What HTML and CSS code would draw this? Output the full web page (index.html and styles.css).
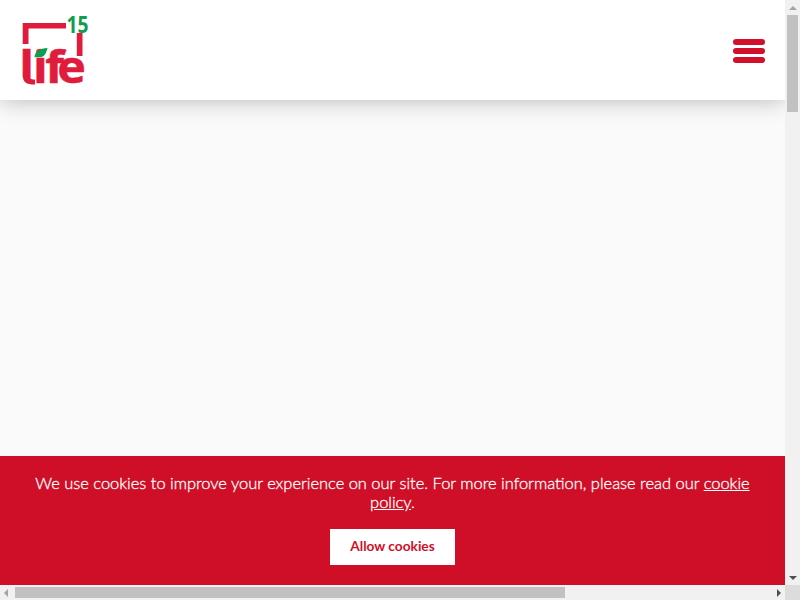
FILE: index.html
```html
<!DOCTYPE html>
<html lang="en">
<head>
<meta charset="utf-8">
<title>Life 15</title>
<link rel="stylesheet" href="styles.css">
</head>
<body>
<div class="frame">
  <div class="viewport">
    <header class="header">
      <svg class="logo" width="72" height="72" viewBox="20 14 72 72" role="img" aria-label="life 15">
        <path class="logo-red" d="M22.700 44V23H66V28.500H28.500V44Z"/>
        <path class="logo-red" d="M76.800 33H82.500V56H76.800Z"/>
        <text class="logo-life" x="0 12.500 23.500 34.500" y="0" transform="translate(19.300 83) scale(1.1 1)">life</text>
        <path class="logo-white" d="M21 77H23.200C23.800 81 26 83.500 30 84V86H21Z"/>
        <path class="logo-red" d="M23 72V76C23 82 26 84.500 35 84.500V79.500C30 79.500 28.500 78 28.500 75V72Z"/>
        <path class="logo-green" d="M34.500 57.300C35 51 40 48.300 47.500 48C46.500 53 44 57.300 40 57.300Z"/>
        <text class="logo-15" x="66.500" y="33" textLength="22" lengthAdjust="spacingAndGlyphs">15</text>
      </svg>
      <button class="menu" aria-label="Menu"><span></span><span></span><span></span></button>
    </header>
    <main class="content"></main>
    <section class="cookie">
      <p class="cookie-text">We use cookies to improve your experience on our site. For more information, please read our <a href="#">cookie policy</a>.</p>
      <a class="cookie-btn" href="#">Allow cookies</a>
    </section>
  </div>
  <div class="vbar">
    <span class="arrow-up"></span>
    <div class="vthumb"></div>
    <span class="arrow-down"></span>
  </div>
  <div class="hbar">
    <span class="arrow-left"></span>
    <div class="htrack"><div class="hthumb"></div></div>
    <span class="arrow-right"></span>
  </div>
  <div class="corner"></div>
</div>
</body>
</html>
```
FILE: styles.css
```css
html, body { margin: 0; height: 100%; overflow: hidden; }
body { font-family: Lato, "Noto Sans", sans-serif; }
.frame {
  display: grid;
  grid-template-columns: 785px 15px;
  grid-template-rows: 585px 15px;
  width: 800px;
  height: 600px;
}
.viewport {
  position: relative;
  display: flex;
  flex-direction: column;
  background: #fafafa;
  overflow: hidden;
}
.header {
  display: flex;
  justify-content: space-between;
  align-items: center;
  flex: 0 0 100px;
  padding: 0 20px;
  box-sizing: border-box;
  background: #fff;
  box-shadow: 0 0 22px rgba(0,0,0,.28);
  position: relative;
}
.logo { display: block; flex: none; overflow: visible; }
.logo-red { fill: #e01b3c; }
.logo-white { fill: #fff; }
.logo-green { fill: #0f9d4f; }
.logo-life {
  font: 700 44px "Open Sans", sans-serif;
  fill: #e01b3c;
  stroke: #e01b3c;
  stroke-width: 0.5px;
}
.logo-15 {
  font: 700 23px "Open Sans", sans-serif;
  fill: #0f9d4f;
}
.menu {
  display: flex;
  flex-direction: column;
  gap: 3px;
  padding: 0;
  border: 0;
  background: none;
  width: 32px;
  margin-top: 1px;
}
.menu span { display: block; height: 6px; border-radius: 3px; background: #d2102c; }
.content { flex: 1; }
.cookie {
  position: absolute;
  left: 0;
  right: 0;
  bottom: 0;
  height: 129px;
  box-sizing: border-box;
  padding-top: 18px;
  background: #cf0f27;
  color: #fff;
  text-align: center;
}
.cookie-text {
  margin: 0 auto;
  width: 730px;
  font-size: 16.450px;
  font-weight: 300;
  line-height: 19px;
  -webkit-text-stroke: 0.3px #fff;
}
.cookie-text a { color: #fff; text-decoration: underline; }
.cookie-btn {
  display: block;
  width: 125px;
  height: 36px;
  margin: 17px auto 0;
  background: #fff;
  color: #cf0f27;
  font-size: 13.700px;
  font-weight: 700;
  line-height: 34px;
  text-decoration: none;
}
.vbar {
  display: flex;
  flex-direction: column;
  align-items: center;
  background: #f1f1f1;
}
.vthumb { width: 11px; height: 97px; margin-top: 5px; background: #c1c1c1; }
.arrow-up, .arrow-down, .arrow-left, .arrow-right { display: block; width: 0; height: 0; flex: none; }
.arrow-up { margin-top: 6px; border: 4px solid transparent; border-top: 0; border-bottom: 4px solid #a3a3a3; }
.arrow-down { margin-top: auto; margin-bottom: 5px; border: 4px solid transparent; border-bottom: 0; border-top: 4px solid #505050; }
.hbar { display: flex; align-items: center; background: #f1f1f1; }
.arrow-left { margin-left: 4px; border: 4px solid transparent; border-left: 0; border-right: 4px solid #a3a3a3; }
.arrow-right { margin-right: 4px; margin-left: auto; border: 4px solid transparent; border-right: 0; border-left: 4px solid #505050; }
.htrack { margin-left: 7px; }
.hthumb { width: 550px; height: 11px; background: #c1c1c1; }
.corner { background: #dcdcdc; }
```
